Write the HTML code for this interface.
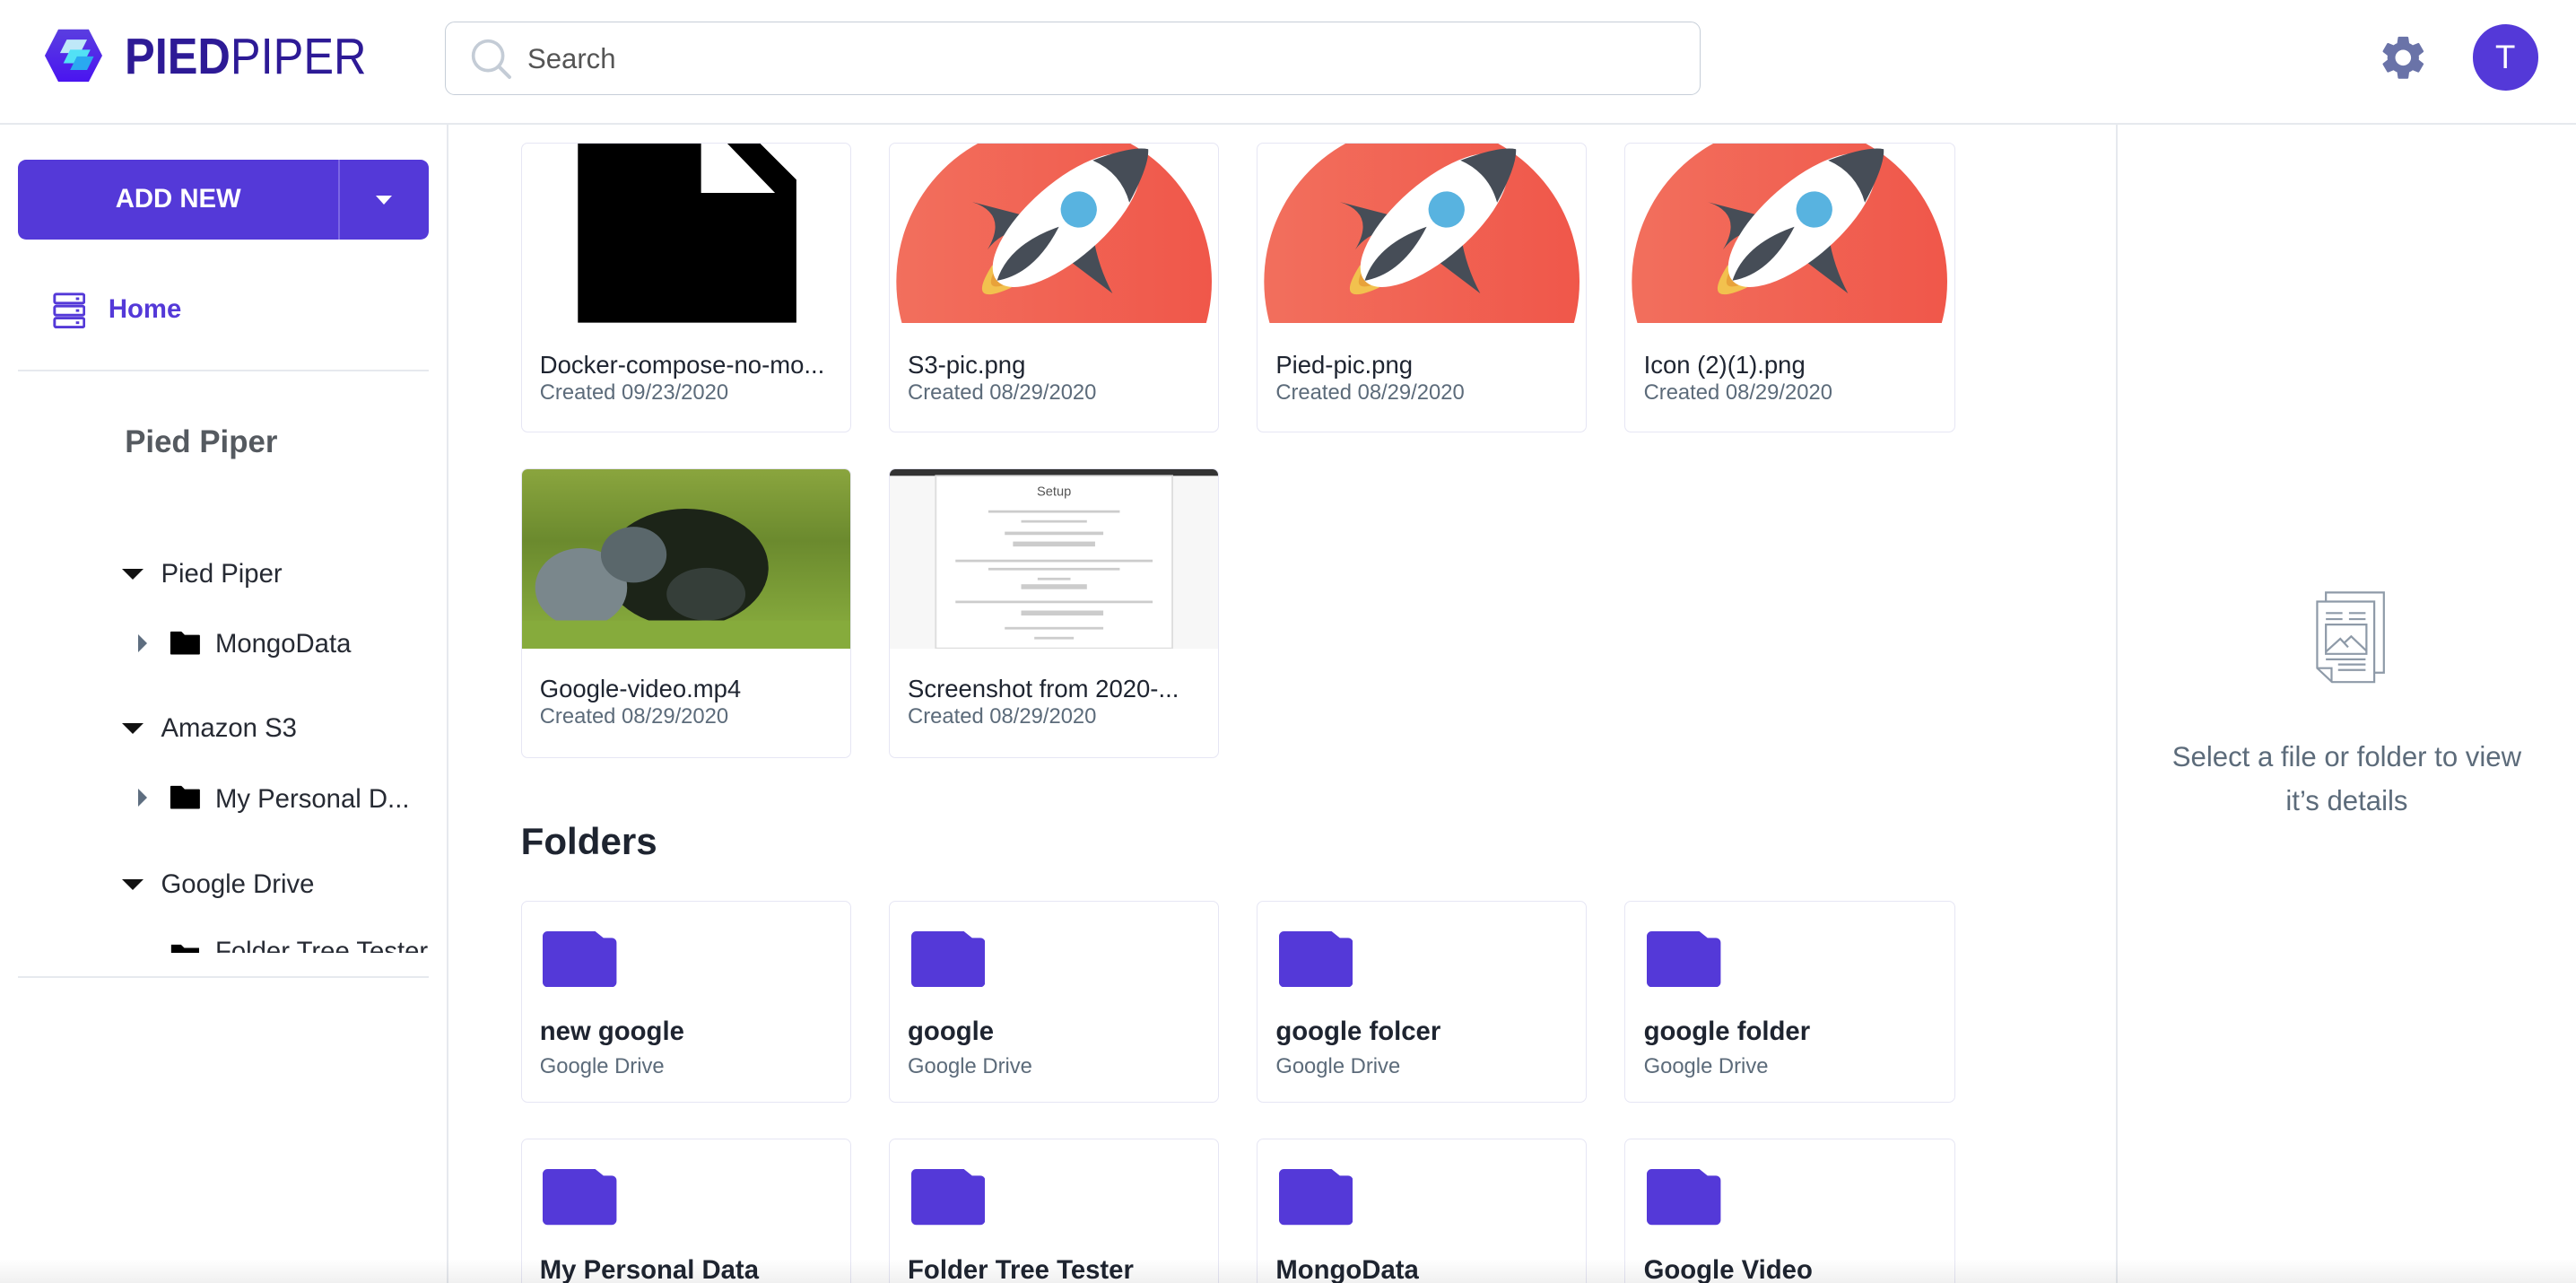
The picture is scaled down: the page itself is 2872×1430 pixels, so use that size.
<!DOCTYPE html>
<html><head><meta charset="utf-8">
<style>
html,body{margin:0;padding:0;background:#fff;overflow:hidden}
body{width:2872px;height:1430px}
#w{zoom:1.8316;width:1568px;height:781px;position:relative;font-family:"Liberation Sans",sans-serif;overflow:hidden}
.a{position:absolute}
.card{position:absolute;width:200px;border:1px solid #e6e6f4;border-radius:4px;background:#fff;overflow:hidden}
.img{position:absolute;left:0;top:0;width:200px;height:109px;overflow:hidden}
.fn{position:absolute;left:11px;font-size:15px;color:#1e2430;white-space:nowrap}
.fd{position:absolute;left:11px;font-size:13px;color:#5c6b7a}
.fold{position:absolute;left:13px;top:18px}
.tree{position:absolute;font-size:16px;color:#262a33;white-space:nowrap}
</style></head><body><div id="w">
<!-- header -->
<div class="a" style="left:0;top:75px;width:1568px;height:1px;background:#e6e9ee"></div>
<svg class="a" style="left:27px;top:16px" width="36" height="36" viewBox="0 0 34 35">
<defs><linearGradient id="hg" x1="0" y1="0" x2="0" y2="1"><stop offset="0" stop-color="#5a3ee0"/><stop offset="1" stop-color="#4a14f0"/></linearGradient></defs>
<polygon points="8,2 26,2 34,17.5 26,33 8,33 0,17.5" fill="url(#hg)"/>
<polygon points="13,8 25,8 21,16 9,16" fill="#bfe8f8"/>
<polygon points="15,14 27,14 23,22 11,22" fill="#52e1f5"/>
<polygon points="19,18 29,18 25,26 15,26" fill="#2aa9f0"/>
</svg>
<div class="a" style="left:76px;top:17px;font-size:31px;color:#2d1a96;transform:scaleX(0.89);transform-origin:0 0;white-space:nowrap"><b>PIED</b>PIPER</div>
<div class="a" style="left:271px;top:13px;width:764px;height:45px;border:1px solid #c6ced8;border-radius:6px;box-sizing:border-box"></div>
<svg class="a" style="left:286px;top:23px" width="26" height="26" viewBox="0 0 26 26"><circle cx="11" cy="11" r="9" fill="none" stroke="#c4ccd6" stroke-width="2"/><line x1="17.5" y1="17.5" x2="24" y2="24" stroke="#c4ccd6" stroke-width="2.2" stroke-linecap="round"/></svg>
<div class="a" style="left:321px;top:26px;font-size:17px;color:#555">Search</div>
<svg class="a" style="left:1447px;top:19px" width="32" height="32" viewBox="0 0 24 24"><path fill="#6a73a8" d="M19.14 12.94c.04-.3.06-.61.06-.94 0-.32-.02-.64-.07-.94l2.030-1.58a.49.49 0 0 0 .12-.61l-1.92-3.32a.488.488 0 0 0-.59-.22l-2.39.96c-.5-.38-1.03-.7-1.62-.94l-.36-2.54a.484.484 0 0 0-.48-.41h-3.84c-.24 0-.43.17-.47.41l-.36 2.54c-.59.24-1.13.57-1.62.94l-2.39-.96c-.22-.08-.47 0-.59.22L2.74 8.87c-.12.21-.08.47.12.61l2.03 1.58c-.05.3-.09.63-.09.94s.02.64.07.94l-2.03 1.58a.49.49 0 0 0-.12.61l1.92 3.32c.12.22.37.29.59.22l2.39-.96c.5.38 1.03.7 1.62.94l.36 2.54c.05.24.24.41.48.41h3.84c.24 0 .44-.17.47-.41l.36-2.540c.59-.24 1.13-.56 1.62-.94l2.39.96c.22.08.47 0 .59-.22l1.92-3.32c.12-.22.07-.47-.12-.61l-2.01-1.58zM12 15.6c-1.98 0-3.6-1.62-3.6-3.6s1.62-3.6 3.6-3.6 3.6 1.62 3.6 3.6-1.62 3.6-3.6 3.6z"/></svg>
<div class="a" style="left:1505px;top:15px;width:40px;height:40px;border-radius:50%;background:#5439d8;color:#fff;font-size:20px;text-align:center;line-height:40px">T</div>
<!-- sidebar -->
<div class="a" style="left:272px;top:76px;width:1px;height:705px;background:#e6e9ee"></div>
<div class="a" style="left:11px;top:97px;width:250px;height:49px;border-radius:5px;background:#5439d8"></div>
<div class="a" style="left:206px;top:97px;width:1px;height:49px;background:#7b66e4"></div>
<div class="a" style="left:11px;top:112px;width:195px;text-align:center;color:#fff;font-weight:bold;font-size:16px">ADD NEW</div>
<div class="a" style="left:229px;top:119px;width:0;height:0;border-left:5px solid transparent;border-right:5px solid transparent;border-top:6px solid #fff"></div>
<svg class="a" style="left:32px;top:178px" width="20" height="22" viewBox="0 0 20 22" fill="none" stroke="#5439d8" stroke-width="1.6"><rect x="1" y="1" width="18" height="5.5" rx="1"/><rect x="1" y="8.3" width="18" height="5.5" rx="1"/><rect x="1" y="15.6" width="18" height="5.5" rx="1"/><line x1="14" y1="3.8" x2="16" y2="3.8"/><line x1="14" y1="11" x2="16" y2="11"/><line x1="14" y1="18.4" x2="16" y2="18.4"/></svg>
<div class="a" style="left:66px;top:179px;font-size:16px;font-weight:bold;color:#5439d8">Home</div>
<div class="a" style="left:11px;top:225px;width:250px;height:1px;background:#e6e9ee"></div>
<div class="a" style="left:76px;top:258px;font-size:19px;font-weight:bold;color:#555a60">Pied Piper</div>
<div class="a" style="left:0;top:330px;width:272px;height:250px;overflow:hidden">
 <div class="a" style="left:74px;top:16px;border-left:7px solid transparent;border-right:7px solid transparent;border-top:7px solid #111"></div>
 <div class="tree" style="left:98px;top:10px">Pied Piper</div>
 <div class="a" style="left:84px;top:56px;border-top:6px solid transparent;border-bottom:6px solid transparent;border-left:6px solid #5e6e80"></div>
 <svg class="a" style="left:103px;top:54px" width="19" height="15" viewBox="0 0 19 15"><path d="M1 1h6l2 2h9v11H1z" fill="#000" stroke="#000" stroke-linejoin="round"/></svg>
 <div class="tree" style="left:131px;top:53px">MongoData</div>
 <div class="a" style="left:74px;top:110px;border-left:7px solid transparent;border-right:7px solid transparent;border-top:7px solid #111"></div>
 <div class="tree" style="left:98px;top:104px">Amazon S3</div>
 <div class="a" style="left:84px;top:150px;border-top:6px solid transparent;border-bottom:6px solid transparent;border-left:6px solid #5e6e80"></div>
 <svg class="a" style="left:103px;top:148px" width="19" height="15" viewBox="0 0 19 15"><path d="M1 1h6l2 2h9v11H1z" fill="#000" stroke="#000" stroke-linejoin="round"/></svg>
 <div class="tree" style="left:131px;top:147px">My Personal D...</div>
 <div class="a" style="left:74px;top:205px;border-left:7px solid transparent;border-right:7px solid transparent;border-top:7px solid #111"></div>
 <div class="tree" style="left:98px;top:199px">Google Drive</div>
 <svg class="a" style="left:103px;top:244px" width="19" height="15" viewBox="0 0 19 15"><path d="M1 1h6l2 2h9v11H1z" fill="#000"/></svg>
 <div class="tree" style="left:131px;top:240px">Folder Tree Tester</div>
</div>
<div class="a" style="left:11px;top:594px;width:250px;height:1px;background:#e6e9ee"></div>
<!-- right panel -->
<div class="a" style="left:1288px;top:76px;width:1px;height:705px;background:#e6e9ee"></div>
<svg class="a" style="left:1409px;top:360px" width="43" height="56" viewBox="1322 118 162 304" preserveAspectRatio="none" fill="none" stroke="#8e9aa8" stroke-width="1.2">
<rect x="1347" y="122" width="133" height="265" vector-effect="non-scaling-stroke"/>
<path d="M1327 152h131v266h-97l-34-46z" fill="#fff" vector-effect="non-scaling-stroke"/>
<path d="M1327 372h33v46" vector-effect="non-scaling-stroke"/>
<path d="M1347 190h38M1400 190h38M1347 210h38M1400 210h38M1347 343h91M1375 360h63M1375 378h63" vector-effect="non-scaling-stroke"/>
<rect x="1347" y="228" width="93" height="97" vector-effect="non-scaling-stroke"/>
<path d="M1347 318L1380 275L1398 303M1388 290L1405 267L1440 315" vector-effect="non-scaling-stroke"/>
</svg>
<div class="a" style="left:1289px;top:447px;width:279px;text-align:center;font-size:17px;line-height:27px;color:#5c6b7a">Select a file or folder to view<br>it’s details</div>
<!-- main -->
<div class="a" style="left:273px;top:76px;width:1015px;height:705px;overflow:hidden">
<div style="position:absolute;left:-273px;top:-76px;width:1568px;height:781px">
 <div class="card" style="left:317px;top:87px;height:175px">
  <div class="img"><svg width="200" height="109"><path d="M34 0H109V30H154L125 0H145L167 22V109H34Z" fill="#000"/></svg></div>
  <div class="fn" style="top:126px">Docker-compose-no-mo...</div><div class="fd" style="top:144px">Created 09/23/2020</div>
 </div>
 <div class="card" style="left:541px;top:87px;height:175px">
  <div class="img"><svg width="200" height="109"><defs><linearGradient id="rg" x1="0" y1="0" x2="1" y2="0"><stop offset="0" stop-color="#f26f5d"/><stop offset="1" stop-color="#f0574a"/></linearGradient><g id="rk"><circle cx="100" cy="84" r="96" fill="url(#rg)"/><g transform="translate(106,48) rotate(-41)"><path d="M-12 -14 L-34 -46 Q-22 -26 -46 -18 Q-28 -22 -18 -6 Z" fill="#464d57"/><path d="M-14 14 L-6 52 Q-2 34 8 18 Z" fill="#464d57"/><path d="M-50 -9 Q-80 0 -50 9 Z" fill="#f2c14e"/><path d="M-50 -6 Q-66 0 -50 6 Z" fill="#e8a23a"/><ellipse cx="2" cy="0" rx="56" ry="23" fill="#fff"/><path d="M38 -17 Q62 -8 68 0 Q62 8 38 17 Q46 0 38 -17Z" fill="#464d57"/><path d="M-54 0 Q-34 -12 -4 0 Q-34 12 -54 0Z" fill="#464d57"/><circle cx="12" cy="0" r="11" fill="#58b3e0"/></g></g></defs><use href="#rk"/></svg></div>
  <div class="fn" style="top:126px">S3-pic.png</div><div class="fd" style="top:144px">Created 08/29/2020</div>
 </div>
 <div class="card" style="left:765px;top:87px;height:175px">
  <div class="img"><svg width="200" height="109"><use href="#rk"/></svg></div>
  <div class="fn" style="top:126px">Pied-pic.png</div><div class="fd" style="top:144px">Created 08/29/2020</div>
 </div>
 <div class="card" style="left:989px;top:87px;height:175px">
  <div class="img"><svg width="200" height="109"><use href="#rk"/></svg></div>
  <div class="fn" style="top:126px">Icon (2)(1).png</div><div class="fd" style="top:144px">Created 08/29/2020</div>
 </div>
 <div class="card" style="left:317px;top:285px;height:175px">
  <div class="img" style="background:linear-gradient(180deg,#8aa53e 0%,#6b8a2e 40%,#8cb140 100%)"><svg width="200" height="109"><ellipse cx="100" cy="60" rx="50" ry="36" fill="#1c2418"/><ellipse cx="36" cy="72" rx="28" ry="24" fill="#7a878c"/><ellipse cx="68" cy="52" rx="20" ry="17" fill="#5a676b"/><ellipse cx="112" cy="76" rx="24" ry="16" fill="#353e39"/><rect x="0" y="92" width="200" height="17" fill="#86ab3c"/></svg></div>
  <div class="fn" style="top:125px">Google-video.mp4</div><div class="fd" style="top:143px">Created 08/29/2020</div>
 </div>
 <div class="card" style="left:541px;top:285px;height:175px">
  <div class="img" style="background:#f7f7f7"><svg width="200" height="109"><rect width="200" height="4" fill="#333"/><rect x="28" y="4" width="144" height="105" fill="#fff" stroke="#ddd"/><text x="100" y="16" font-size="8" text-anchor="middle" fill="#555" font-family="Liberation Sans">Setup</text><g fill="#ccc"><rect x="60" y="25" width="80" height="1.5"/><rect x="80" y="31" width="40" height="1.5"/><rect x="70" y="38" width="60" height="2"/><rect x="75" y="44" width="50" height="3"/><rect x="40" y="55" width="120" height="1.5"/><rect x="60" y="60" width="80" height="1.5"/><rect x="90" y="66" width="20" height="1.5"/><rect x="80" y="70" width="40" height="3"/><rect x="40" y="80" width="120" height="1.5"/><rect x="80" y="86" width="50" height="3"/><rect x="70" y="96" width="60" height="1.5"/><rect x="88" y="102" width="24" height="1.5"/></g></svg></div>
  <div class="fn" style="top:125px">Screenshot from 2020-...</div><div class="fd" style="top:143px">Created 08/29/2020</div>
 </div>
 <div class="a" style="left:317px;top:499px;font-size:23px;font-weight:bold;color:#1e2430">Folders</div>
 <div class="card" style="left:317px;top:548px;height:122px"><svg class="fold" width="45" height="34" viewBox="0 0 45 34"><path d="M3 0h29l5 4h5a3 3 0 0 1 3 3v24a3 3 0 0 1-3 3H3a3 3 0 0 1-3-3V3a3 3 0 0 1 3-3z" fill="#5439d8"/></svg><div class="fn" style="top:70px;font-weight:bold;font-size:16px">new google</div><div class="fd" style="top:93px">Google Drive</div></div>
 <div class="card" style="left:541px;top:548px;height:122px"><svg class="fold" width="45" height="34" viewBox="0 0 45 34"><path d="M3 0h29l5 4h5a3 3 0 0 1 3 3v24a3 3 0 0 1-3 3H3a3 3 0 0 1-3-3V3a3 3 0 0 1 3-3z" fill="#5439d8"/></svg><div class="fn" style="top:70px;font-weight:bold;font-size:16px">google</div><div class="fd" style="top:93px">Google Drive</div></div>
 <div class="card" style="left:765px;top:548px;height:122px"><svg class="fold" width="45" height="34" viewBox="0 0 45 34"><path d="M3 0h29l5 4h5a3 3 0 0 1 3 3v24a3 3 0 0 1-3 3H3a3 3 0 0 1-3-3V3a3 3 0 0 1 3-3z" fill="#5439d8"/></svg><div class="fn" style="top:70px;font-weight:bold;font-size:16px">google folcer</div><div class="fd" style="top:93px">Google Drive</div></div>
 <div class="card" style="left:989px;top:548px;height:122px"><svg class="fold" width="45" height="34" viewBox="0 0 45 34"><path d="M3 0h29l5 4h5a3 3 0 0 1 3 3v24a3 3 0 0 1-3 3H3a3 3 0 0 1-3-3V3a3 3 0 0 1 3-3z" fill="#5439d8"/></svg><div class="fn" style="top:70px;font-weight:bold;font-size:16px">google folder</div><div class="fd" style="top:93px">Google Drive</div></div>
 <div class="card" style="left:317px;top:693px;height:122px"><svg class="fold" width="45" height="34" viewBox="0 0 45 34"><path d="M3 0h29l5 4h5a3 3 0 0 1 3 3v24a3 3 0 0 1-3 3H3a3 3 0 0 1-3-3V3a3 3 0 0 1 3-3z" fill="#5439d8"/></svg><div class="fn" style="top:70px;font-weight:bold;font-size:16px">My Personal Data</div></div>
 <div class="card" style="left:541px;top:693px;height:122px"><svg class="fold" width="45" height="34" viewBox="0 0 45 34"><path d="M3 0h29l5 4h5a3 3 0 0 1 3 3v24a3 3 0 0 1-3 3H3a3 3 0 0 1-3-3V3a3 3 0 0 1 3-3z" fill="#5439d8"/></svg><div class="fn" style="top:70px;font-weight:bold;font-size:16px">Folder Tree Tester</div></div>
 <div class="card" style="left:765px;top:693px;height:122px"><svg class="fold" width="45" height="34" viewBox="0 0 45 34"><path d="M3 0h29l5 4h5a3 3 0 0 1 3 3v24a3 3 0 0 1-3 3H3a3 3 0 0 1-3-3V3a3 3 0 0 1 3-3z" fill="#5439d8"/></svg><div class="fn" style="top:70px;font-weight:bold;font-size:16px">MongoData</div></div>
 <div class="card" style="left:989px;top:693px;height:122px"><svg class="fold" width="45" height="34" viewBox="0 0 45 34"><path d="M3 0h29l5 4h5a3 3 0 0 1 3 3v24a3 3 0 0 1-3 3H3a3 3 0 0 1-3-3V3a3 3 0 0 1 3-3z" fill="#5439d8"/></svg><div class="fn" style="top:70px;font-weight:bold;font-size:16px">Google Video</div></div>
</div>
</div>
<div class="a" style="left:0;top:766px;width:1568px;height:15px;background:linear-gradient(180deg,rgba(0,0,0,0),rgba(0,0,0,0.06))"></div>
</div></body></html>
